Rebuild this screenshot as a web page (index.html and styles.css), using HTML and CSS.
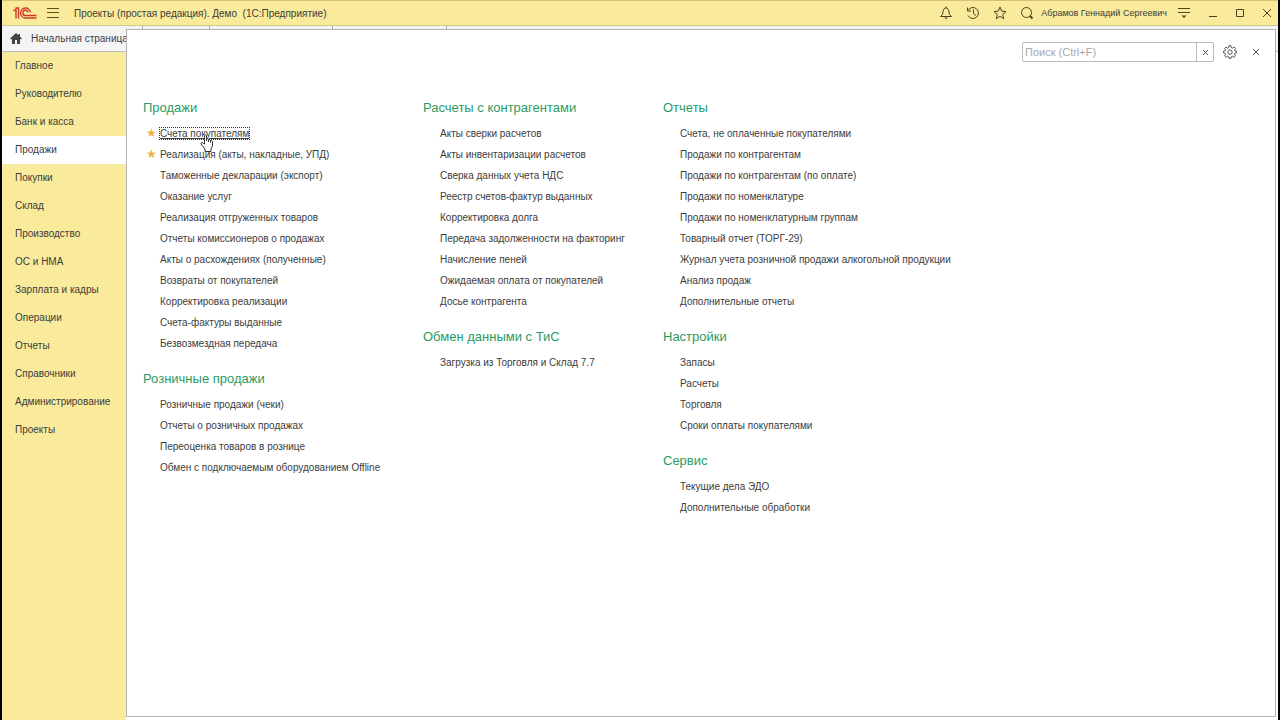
FILE: index.html
```
<!DOCTYPE html>
<html lang="ru">
<head>
  <meta charset="UTF-8">
  <meta name="viewport" content="width=device-width, initial-scale=1.0">
  <title>Проекты (простая редакция). Демо</title>
  <link rel="stylesheet" href="styles.css">
</head>
<body>
  <!-- Title bar -->
  <header class="titlebar">
    <svg class="logo" width="24" height="12" viewBox="0 0 24 12" fill="none" stroke="#cf3a26" stroke-width="1.400">
      <path d="M.5 4 3 2V11.500M2.500 1H5.500V11.500"/>
      <path d="M17.500 5.500A5 5 0 1 0 12.500 11H23.500"/>
      <path d="M15 5.500A2.600 2.600 0 1 0 12.500 8.500H23.500"/>
    </svg>
    <button class="icon-btn menu-btn" aria-label="Меню">
      <svg width="12" height="10" viewBox="0 0 12 10" stroke="#5a5020" fill="none"><path d="M0 .5H12M0 4.500H12M0 9.500H12"/></svg>
    </button>
    <h1 class="title">Проекты (простая редакция). Демо&nbsp; (1С:Предприятие)</h1>
    <div class="tools">
      <button class="icon-btn" aria-label="Уведомления">
        <svg width="14" height="14" viewBox="0 0 14 14" fill="none" stroke="#4a4320"><path d="M1.500 10.500H12.500L10.500 8.500 9.700 4.500C9.300 2.800 8.500 2 7 2S4.700 2.800 4.300 4.500L3.500 8.500Z"/><path d="M7 .5V2"/><path d="M5.300 11.500H8.700L7 13.300Z" fill="#4a4320" stroke="none"/></svg>
      </button>
      <button class="icon-btn" aria-label="История">
        <svg width="14" height="14" viewBox="0 0 14 14" fill="none" stroke="#4a4320"><path d="M2 4.500A5.500 5.500 0 1 1 2 9.500M1.500 1.500V5H5M7.500 3.500V7.500L10 9.500"/></svg>
      </button>
      <button class="icon-btn" aria-label="Избранное">
        <svg width="14" height="14" viewBox="0 0 14 14" fill="none" stroke="#4a4320"><path d="M7 1 8.700 5.200 13 5.500 9.700 8.300 10.800 12.700 7 10.300 3.200 12.700 4.300 8.300 1 5.500 5.300 5.200Z"/></svg>
      </button>
      <button class="icon-btn" aria-label="Поиск">
        <svg width="14" height="14" viewBox="0 0 14 14" fill="none" stroke="#4a4320"><circle cx="6.500" cy="6.500" r="5"/><path d="M10 10 12.500 12.500" stroke-width="2"/></svg>
      </button>
      <span class="user">Абрамов Геннадий Сергеевич</span>
      <button class="icon-btn" aria-label="Настройка окна">
        <svg width="12" height="12" viewBox="0 0 12 12" fill="none" stroke="#4a4320"><path d="M0 1.500H12M0 5.500H12"/><path d="M3.500 8.500H8.500L6 11Z" fill="#4a4320" stroke="none"/></svg>
      </button>
      <button class="icon-btn" aria-label="Свернуть">
        <svg width="8" height="10" viewBox="0 0 8 10" stroke="#4a4320"><path d="M0 8.500H8"/></svg>
      </button>
      <button class="icon-btn" aria-label="Развернуть">
        <svg width="8" height="8" viewBox="0 0 8 8" fill="none" stroke="#4a4320"><path d="M.5.5H7.500V7.500H.5Z"/></svg>
      </button>
      <button class="icon-btn" aria-label="Закрыть">
        <svg width="8" height="8" viewBox="0 0 8 8" stroke="#4a4320"><path d="M0 0 8 8M8 0 0 8"/></svg>
      </button>
    </div>
  </header>

  <!-- Open windows -->
  <div class="tabs">
    <a class="tab home" href="#">
      <svg width="12" height="11" viewBox="0 0 12 11" fill="#444"><path d="M6 0 0 5.500 1 6.500 2 5.700V11H5V7H7V11H10V5.700L11 6.500 12 5.500 10 3.700V1H8.500V2.300Z"/></svg>
      Начальная страница
    </a>
    <span class="tab"></span>
    <span class="tab tab-wide"></span>
    <span class="tab tab-wide"></span>
  </div>

  <div class="workspace">
    <nav class="sections">
      <a href="#">Главное</a>
      <a href="#">Руководителю</a>
      <a href="#">Банк и касса</a>
      <a href="#" class="active">Продажи</a>
      <a href="#">Покупки</a>
      <a href="#">Склад</a>
      <a href="#">Производство</a>
      <a href="#">ОС и НМА</a>
      <a href="#">Зарплата и кадры</a>
      <a href="#">Операции</a>
      <a href="#">Отчеты</a>
      <a href="#">Справочники</a>
      <a href="#">Администрирование</a>
      <a href="#">Проекты</a>
    </nav>
  </div>

  <!-- Section menu, opens over the tabs -->
  <main class="panel">
    <div class="panel-tools">
      <div class="search">
        <input type="text" placeholder="Поиск (Ctrl+F)" aria-label="Поиск">
        <button aria-label="Очистить">
          <svg width="5" height="5" viewBox="0 0 5 5" stroke="#555"><path d="M0 0 5 5M5 0 0 5"/></svg>
        </button>
      </div>
      <button class="icon-btn" aria-label="Настройка">
        <svg width="14" height="14" viewBox="0 0 14 14" fill="none" stroke="#555"><path d="M5.700 2.600 6 .7H8L8.300 2.600 9.700 3.200 11.200 2.100 12.600 3.500 11.500 5 12 6 13.400 6.200V8L11.700 8.400 11.300 9.500 12.400 11 11 12.300 9.500 11.300 8.300 11.700 8 13.400H6L5.700 11.700 4.500 11.300 3 12.300 1.600 11 2.600 9.500 2.200 8.400.6 8V6.200L2.200 5.900 2.700 4.900 1.600 3.500 3 2.100 4.500 3.200Z"/><circle cx="7" cy="7.100" r="2.200"/></svg>
      </button>
      <button class="icon-btn" aria-label="Закрыть меню">
        <svg width="6" height="6" viewBox="0 0 6 6" stroke="#555"><path d="M0 0 6 6M6 0 0 6"/></svg>
      </button>
    </div>

    <div class="columns">
      <div class="column">
        <section>
          <h2>Продажи</h2>
          <ul>
            <li class="starred">
              <a href="#" class="focused">Счета покупателям</a>
              <svg class="cursor" width="14" height="18" viewBox="0 0 14 18" fill="#fff" stroke="#333"><path d="M4.500 10V1.500C4.500.3 6.500.3 6.500 1.500V7 5.500C6.500 4.500 8.500 4.500 8.500 5.700V8 6.300C8.500 5.300 10.500 5.300 10.500 6.500V8.500 7.500C10.500 6.500 12.500 6.700 12.500 7.700V12L11 15V17.500H5V15L1 10C.5 8.500 2 8 3 9Z"/></svg>
            </li>
            <li class="starred"><a href="#">Реализация (акты, накладные, УПД)</a></li>
            <li><a href="#">Таможенные декларации (экспорт)</a></li>
            <li><a href="#">Оказание услуг</a></li>
            <li><a href="#">Реализация отгруженных товаров</a></li>
            <li><a href="#">Отчеты комиссионеров о продажах</a></li>
            <li><a href="#">Акты о расхождениях (полученные)</a></li>
            <li><a href="#">Возвраты от покупателей</a></li>
            <li><a href="#">Корректировка реализации</a></li>
            <li><a href="#">Счета-фактуры выданные</a></li>
            <li><a href="#">Безвозмездная передача</a></li>
          </ul>
        </section>
        <section>
          <h2>Розничные продажи</h2>
          <ul>
            <li><a href="#">Розничные продажи (чеки)</a></li>
            <li><a href="#">Отчеты о розничных продажах</a></li>
            <li><a href="#">Переоценка товаров в рознице</a></li>
            <li><a href="#">Обмен с подключаемым оборудованием Offline</a></li>
          </ul>
        </section>
      </div>

      <div class="column">
        <section>
          <h2>Расчеты с контрагентами</h2>
          <ul>
            <li><a href="#">Акты сверки расчетов</a></li>
            <li><a href="#">Акты инвентаризации расчетов</a></li>
            <li><a href="#">Сверка данных учета НДС</a></li>
            <li><a href="#">Реестр счетов-фактур выданных</a></li>
            <li><a href="#">Корректировка долга</a></li>
            <li><a href="#">Передача задолженности на факторинг</a></li>
            <li><a href="#">Начисление пеней</a></li>
            <li><a href="#">Ожидаемая оплата от покупателей</a></li>
            <li><a href="#">Досье контрагента</a></li>
          </ul>
        </section>
        <section>
          <h2>Обмен данными с ТиС</h2>
          <ul>
            <li><a href="#">Загрузка из Торговля и Склад 7.7</a></li>
          </ul>
        </section>
      </div>

      <div class="column">
        <section>
          <h2>Отчеты</h2>
          <ul>
            <li><a href="#">Счета, не оплаченные покупателями</a></li>
            <li><a href="#">Продажи по контрагентам</a></li>
            <li><a href="#">Продажи по контрагентам (по оплате)</a></li>
            <li><a href="#">Продажи по номенклатуре</a></li>
            <li><a href="#">Продажи по номенклатурным группам</a></li>
            <li><a href="#">Товарный отчет (ТОРГ-29)</a></li>
            <li><a href="#">Журнал учета розничной продажи алкогольной продукции</a></li>
            <li><a href="#">Анализ продаж</a></li>
            <li><a href="#">Дополнительные отчеты</a></li>
          </ul>
        </section>
        <section>
          <h2>Настройки</h2>
          <ul>
            <li><a href="#">Запасы</a></li>
            <li><a href="#">Расчеты</a></li>
            <li><a href="#">Торговля</a></li>
            <li><a href="#">Сроки оплаты покупателями</a></li>
          </ul>
        </section>
        <section>
          <h2>Сервис</h2>
          <ul>
            <li><a href="#">Текущие дела ЭДО</a></li>
            <li><a href="#">Дополнительные обработки</a></li>
          </ul>
        </section>
      </div>
    </div>
  </main>
</body>
</html>
```
FILE: styles.css
```
* {
  box-sizing: border-box;
}
body {
  margin: 0;
  min-height: 100vh;
  display: flex;
  flex-direction: column;
  position: relative;
  border-left: 2px solid #000;
  border-right: 2px solid #000;
  font-family: "Liberation Sans", Arial, sans-serif;
  font-size: 10px;
  color: #3c3c3c;
  background: #fff;
}
a {
  color: inherit;
  text-decoration: none;
}
svg {
  display: block;
  flex: none;
}
.icon-btn {
  padding: 0;
  border: 0;
  background: none;
}

/* title bar */
.titlebar {
  display: flex;
  align-items: center;
  height: 26px;
  padding: 0 7px 0 11px;
  background: #f9eb9b;
  border-top: 1px solid #d2c379;
  border-bottom: 1px solid #d2c88f;
}
.menu-btn {
  margin-left: 10px;
}
.title {
  margin: 0 0 0 15px;
  font-size: 10px;
  font-weight: normal;
}
.tools {
  display: flex;
  align-items: center;
  gap: 13px;
  margin-left: auto;
}
.user {
  margin: 0 -2px 0 -6px;
  font-size: 9px;
}
.tools .user ~ .icon-btn {
  margin-right: 6px;
}
.tools .icon-btn:last-child {
  margin-right: 0;
}

/* tabs */
.tabs {
  display: flex;
  height: 26px;
  background: #f4f4f4;
  border-bottom: 1px solid #bbb;
}
.tab {
  width: 67px;
  border-right: 1px solid #aaa;
}
.home {
  display: flex;
  align-items: center;
  gap: 9px;
  width: 141px;
  padding-left: 8px;
  white-space: nowrap;
}
.tab-wide {
  width: 114px;
}
.tab.tab-wide:nth-child(3) {
  width: 123px;
}

/* sections */
.workspace {
  flex: 1;
  display: flex;
}
.sections {
  width: 124px;
  background: #f9eb9b;
}
.sections a {
  display: block;
  padding-left: 13px;
  line-height: 28px;
}
.sections .active {
  background: #fff;
}

/* section menu */
.panel {
  position: absolute;
  top: 29px;
  right: 2px;
  bottom: 3px;
  left: 124px;
  background: #fff;
  border: 1px solid #b4b4b8;
}
.panel-tools {
  display: flex;
  justify-content: flex-end;
  align-items: center;
  gap: 16px;
  padding: 12px 16px 0 0;
}
.panel-tools .search {
  display: flex;
  width: 192px;
  height: 20px;
  margin-right: -7px;
  border: 1px solid #bbb;
  border-radius: 2px;
}
.search input {
  flex: 1;
  min-width: 0;
  padding: 0 2px;
  border: 0;
  outline: 0;
  font: inherit;
  font-size: 11px;
  background: none;
}
.search input::placeholder {
  color: #aaa;
}
.search button {
  display: flex;
  align-items: center;
  justify-content: center;
  width: 17px;
  padding: 0;
  border: 0;
  border-left: 1px solid #bbb;
  background: none;
}
.columns {
  display: grid;
  grid-template-columns: 280px 240px 1fr;
  padding: 36px 16px 0;
}
section {
  margin-bottom: 15px;
}
h2 {
  margin: 0 0 5px;
  font-size: 13px;
  font-weight: normal;
  line-height: 20px;
  color: #2b9b63;
}
ul {
  margin: 0;
  padding: 0 0 0 17px;
  list-style: none;
}
li {
  position: relative;
  line-height: 21px;
  white-space: nowrap;
}
.starred::before {
  content: "★";
  position: absolute;
  left: -14px;
  font-family: "DejaVu Sans", sans-serif;
  font-size: 12px;
  color: #f0b040;
}
.focused {
  text-decoration: underline;
  outline: 1px dotted #333;
}
.cursor {
  position: absolute;
  top: 11px;
  left: 40px;
  z-index: 1;
}
```
